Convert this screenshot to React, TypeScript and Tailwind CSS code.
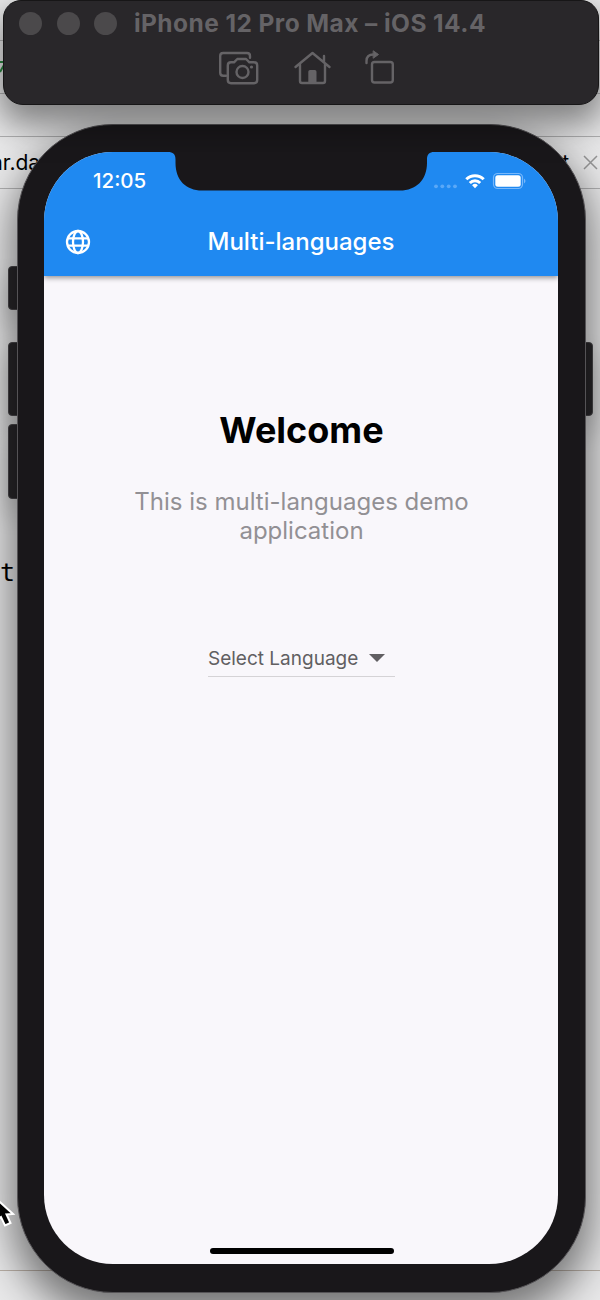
function Backdrop() {
  return (
    <div className="flex h-full flex-col bg-[#e9e9ea] text-black">
      <div className="h-[41px] shrink-0 border-b border-[#b4b4b5]" />
      <div className="flex h-[53px] shrink-0 items-center border-b border-[#b4b4b5]">
        <svg className="h-4 w-1.5" viewBox="0 0 6 16" fill="none" stroke="#2c8b43" strokeWidth="2">
          <path d="M0 3h4M0 13l4-7" />
        </svg>
      </div>
      <div className="h-[43px] shrink-0 border-b border-[#b0b0b1]" />
      <div className="flex h-[52px] shrink-0 items-center justify-between border-b border-[#b0b0b1]">
        <span className="-ml-[9px] text-[21px] leading-none">ar.da</span>
        <div className="flex items-center gap-[14px] pr-[2px]">
          <span className="text-[21px] leading-none">t</span>
          <svg className="h-[15px] w-[15px]" viewBox="0 0 15 15" stroke="#969697" strokeWidth="1.5">
            <path d="M1 1l13 13M14 1L1 14" />
          </svg>
        </div>
      </div>
      <div className="h-[1082px] shrink-0 border-b border-[#b9afa6]">
        <div className="pt-[368px] font-['DejaVu_Sans_Mono',monospace] text-[25px] leading-8">t</div>
      </div>
    </div>
  );
}

function SimulatorBar() {
  return (
    <header className="flex h-[105px] w-[596px] flex-col rounded-t-[18px] rounded-b-[20px] border border-[#171617] bg-[#29272a] shadow-[0_16px_34px_4px_rgba(0,0,0,0.45)]">
      <div className="flex h-[45px] items-center pl-[15px]">
        <div className="flex gap-[14.5px]">
          <i className="size-[23px] rounded-full bg-[#4b494b]" />
          <i className="size-[23px] rounded-full bg-[#4b494b]" />
          <i className="size-[23px] rounded-full bg-[#4b494b]" />
        </div>
        <h1 className="ml-[17px] text-[24.5px] leading-none font-bold tracking-[0.43px] whitespace-nowrap text-[#656366]">
          iPhone 12 Pro Max – iOS 14.4
        </h1>
      </div>
      <svg className="mt-px ml-[214px] h-[38px] w-[180px]" viewBox="218 51 180 38" fill="none" stroke="#656366" strokeWidth="2.4" strokeLinejoin="round" strokeLinecap="round">
        <path d="M226 79.800h-2.800q-3 0-3-3V60q0-3 3-3h23.800q3 0 3 3v1.700" />
        <path d="M231 66.300h3l3.300-3.300h8.800l3.300 3.300h4.600q3.200 0 3.200 3.200v14.500q0 3.200-3.200 3.200h-23q-3.200 0-3.200-3.200V69.500q0-3.200 3.200-3.200z" />
        <circle cx="242.500" cy="76" r="6" />
        <circle cx="251.500" cy="71" r="1.600" fill="#656366" stroke="none" />
        <path d="M295.500 71l17-14 17 14M300 68.500v16.500q0 2 2 2h21q2 0 2-2V68.500M324 66v-6" />
        <path d="M308.300 87v-11.300q0-1.700 1.700-1.700h4.800q1.700 0 1.700 1.700V87z" fill="#656366" stroke="none" />
        <rect x="372" y="66" width="20.800" height="20.500" rx="2.500" />
        <path d="M366.500 67v-2q0-6.500 7-6.500" />
        <path d="M373.500 55l5 3.500-5 3.500z" fill="#656366" strokeWidth="1" />
      </svg>
    </header>
  );
}

function Notch() {
  return (
    <svg className="absolute top-0 left-[124px] z-20 h-[39px] w-[266px]" viewBox="0 0 266 39" fill="#19171a">
      <path d="M0-1V0C5 0 7.500 2 7.500 7.500V11C7.500 28 18 38.500 34 38.500H232C248 38.500 259 28 259 11V7.500C259 2 261.500 0 266 0V-1z" />
    </svg>
  );
}

function StatusIcons() {
  return (
    <svg className="h-[20px] w-[94px]" viewBox="433 171 94 20">
      <g fill="#5aa8f7">
        <circle cx="436" cy="186.300" r="1.900" />
        <circle cx="442.300" cy="186.300" r="1.900" />
        <circle cx="448.700" cy="186.300" r="1.900" />
        <circle cx="455" cy="186.300" r="1.900" />
      </g>
      <g fill="none" stroke="#fff" strokeWidth="3">
        <path d="M466.300 179.300a12.300 12.300 0 0 1 17.400 0" />
        <path d="M469.800 183a7.300 7.300 0 0 1 10.400 0" />
      </g>
      <path d="M475 188.200l-2.900-3a4.200 4.200 0 0 1 5.800 0z" fill="#fff" />
      <rect x="493.500" y="173.500" width="29" height="15" rx="4.200" fill="none" stroke="#78b8fb" strokeWidth="1.200" />
      <rect x="495.300" y="175.300" width="25.400" height="11.400" rx="2.500" fill="#fff" />
      <path d="M524 178.500q3 2.500 0 5z" fill="#78b8fb" />
    </svg>
  );
}

function Phone() {
  return (
    <div className="h-[1169px] w-[569px] rounded-[96px] border border-[#555356] bg-[#19171a] pt-[27px] pr-[27px] pb-[28px] pl-[26px] shadow-[0_18px_40px_6px_rgba(0,0,0,0.5)]">
      <div className="relative flex h-full flex-col overflow-hidden rounded-[69px] bg-[#f9f7fb]">
        <Notch />
        <div className="z-10 h-[124px] shrink-0 bg-[#1f89f1] text-white shadow-[0_2px_5px_rgba(0,0,0,0.4)]">
          <div className="flex h-[58px] items-center justify-between pr-[31px] pl-[49px]">
            <span className="text-[20.5px] leading-none font-medium">12:05</span>
            <StatusIcons />
          </div>
          <div className="grid h-[64px] grid-cols-[1fr_auto_1fr] items-center">
            <svg className="ml-[21px] size-[26px]" viewBox="0 0 26 26" fill="none" stroke="#fff" strokeWidth="2.300">
              <circle cx="13" cy="13" r="11" />
              <ellipse cx="13" cy="13" rx="5" ry="11" />
              <path d="M3 9.300h20M3 16.700h20" />
            </svg>
            <h2 className="text-[24px] leading-none font-medium whitespace-nowrap">Multi-languages</h2>
          </div>
        </div>
        <main className="flex grow flex-col items-center pl-px text-center">
          <h3 className="mt-[132px] text-[36px] leading-[44px] font-bold text-black">Welcome</h3>
          <p className="mt-[35px] w-[400px] text-[24px] leading-[29px] text-[#929094]">
            This is multi-languages demo application
          </p>
          <button className="mt-[94px] flex h-[38px] w-[187px] items-center justify-between border-b border-[#d5d3d6] pr-[10px] text-[19px] whitespace-nowrap text-[#615f62]">
            <span className="pt-[3px]">Select Language</span>
            <svg className="h-[8px] w-[16px] shrink-0" viewBox="0 0 16 8" fill="#615f62">
              <path d="M0 0h16L8 8z" />
            </svg>
          </button>
        </main>
        <div className="mb-[10px] ml-px h-[6px] w-[184px] self-center rounded-full bg-black" />
      </div>
    </div>
  );
}

export default function App() {
  return (
    <div className="relative h-[1300px] w-[600px] overflow-hidden font-[Inter,'Liberation_Sans',sans-serif]">
      <Backdrop />
      <div className="absolute top-[266px] left-[8px] h-[44px] w-[12px] rounded-l-[4px] border border-[#4a484b] bg-[#29272a] shadow-[0_14px_24px_2px_rgba(0,0,0,0.2)]" />
      <div className="absolute top-[342px] left-[8px] h-[74px] w-[12px] rounded-l-[4px] border border-[#4a484b] bg-[#29272a] shadow-[0_14px_24px_2px_rgba(0,0,0,0.2)]" />
      <div className="absolute top-[424px] left-[8px] h-[75px] w-[12px] rounded-l-[4px] border border-[#4a484b] bg-[#29272a] shadow-[0_14px_24px_2px_rgba(0,0,0,0.2)]" />
      <div className="absolute top-[342px] left-[581px] h-[74px] w-[12px] rounded-r-[4px] border border-[#4a484b] bg-[#29272a] shadow-[0_14px_24px_2px_rgba(0,0,0,0.2)]" />
      <div className="absolute top-[124px] left-[17px]">
        <Phone />
      </div>
      <div className="absolute top-0 left-[3px]">
        <SimulatorBar />
      </div>
      <svg className="absolute top-[1192px] left-0 h-[38px] w-[18px]" viewBox="0 0 18 38" fill="#000" stroke="#fff" strokeWidth="2">
        <path d="M-10 1L13 22L6.500 22.500L10.500 31L5 33.500L1 25L-10 34z" />
      </svg>
    </div>
  );
}
